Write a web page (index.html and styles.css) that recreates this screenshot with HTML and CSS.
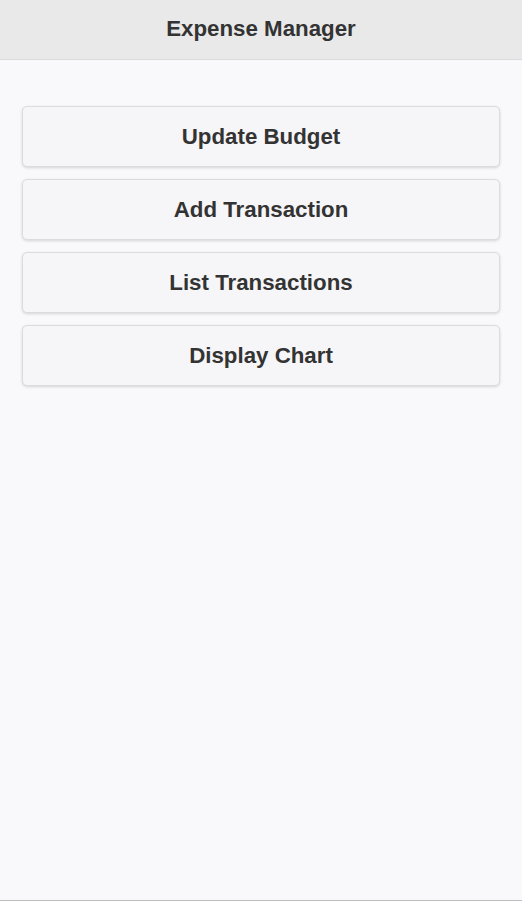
FILE: index.html
```html
<!DOCTYPE html>
<html>
<head>
<meta charset="utf-8">
<link rel="stylesheet" href="styles.css">
</head>
<body>
<div class="page">
  <header class="header"><h1 class="title">Expense Manager</h1></header>
  <main class="content">
    <a class="btn" href="#">Update Budget</a>
    <a class="btn" href="#">Add Transaction</a>
    <a class="btn" href="#">List Transactions</a>
    <a class="btn" href="#">Display Chart</a>
  </main>
</div>
</body>
</html>
```
FILE: styles.css
```css
html, body { margin: 0; padding: 0; }
body {
  font-family: "Liberation Sans", Arial, Helvetica, sans-serif;
  background: #f9f8fa;
  color: #333;
}
.page {
  height: 900px;
  border-bottom: 1px solid #bdbdbd;
  display: flex;
  flex-direction: column;
  background: #f9f8fa;
}
.header {
  height: 59px;
  background: #e9e9e9;
  border-bottom: 1px solid #dadada;
  display: flex;
  align-items: center;
  justify-content: center;
}
.title {
  margin: 0;
  font-size: 22.3px;
  font-weight: bold;
  color: #333;
  position: relative;
  top: -1px;
}
.content {
  display: flex;
  flex-direction: column;
  gap: 12px;
  padding: 46px 22px 0 22px;
}
.btn {
  height: 61px;
  box-sizing: border-box;
  display: flex;
  align-items: center;
  justify-content: center;
  background: #f6f5f7;
  border: 1px solid #dcdcdc;
  border-radius: 5px;
  box-shadow: 0 1px 3px rgba(0,0,0,0.15);
  font-size: 22.3px;
  font-weight: bold;
  color: #333;
  text-decoration: none;
}
```
